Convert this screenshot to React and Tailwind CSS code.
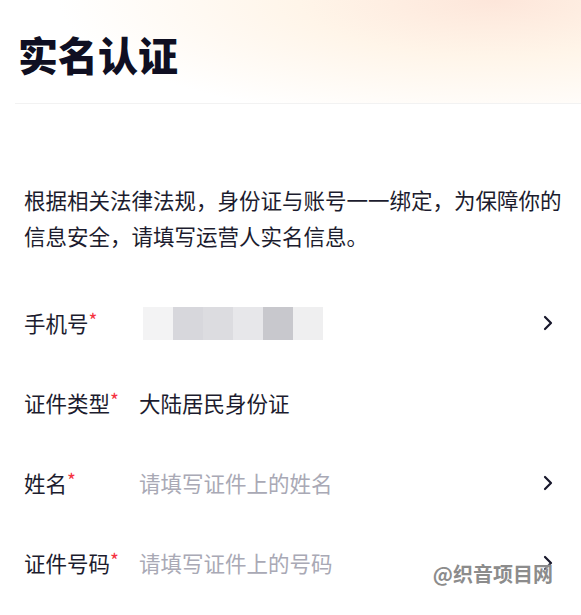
import React from "react";

const mosaic = ["#f3f3f4", "#d7d7dc", "#dcdce0", "#e7e7ea", "#c8c8cd", "#efeff0"];

function Chevron() {
  return (
    <svg width="12" height="16" viewBox="0 0 12 16" fill="none" className="shrink-0">
      <polyline
        points="3,2 9,8 3,14"
        stroke="#17172b"
        strokeWidth="2.2"
        strokeLinecap="round"
        strokeLinejoin="round"
      />
    </svg>
  );
}

function Row({ label, children, arrow = true }) {
  return (
    <div className="flex h-[80px] items-center pl-6 pr-[27px]">
      <div className="w-[115px] shrink-0 text-[#1c1c2e]">
        {label}
        <span className="relative top-[5px] inline-block align-top text-[19px] leading-none text-[#f5333f]">*</span>
      </div>
      <div className="flex flex-1 items-center">{children}</div>
      {arrow && <Chevron />}
    </div>
  );
}

export default function App() {
  return (
    <div className="relative min-h-[615px] w-full overflow-hidden bg-white font-['Noto_Sans_CJK_SC','Noto_Sans',sans-serif] text-[21.5px] leading-[36px]">
      <div className="bg-[radial-gradient(ellipse_75%_120%_at_85%_0%,#fde6da_0%,#fff5e9_45%,#ffffff_100%)]">
        <div className="h-[103px] pl-[18px] pt-[32px]">
          <h1 className="text-[40px] font-black leading-[44px] text-[#0f0f22]">实名认证</h1>
        </div>
        <div className="ml-[15px] border-b border-[#f2f2f2]" />
      </div>

      <p className="mt-[78px] pl-6 pr-[12px] text-[#1c1c2e]">
        根据相关法律法规，身份证与账号一一绑定，为保障你的信息安全，请填写运营人实名信息。
      </p>

      <div className="mt-[29px]">
        <Row label="手机号">
          <div className="ml-[4px] flex h-[33px]">
            {mosaic.map((c, i) => (
              <div key={i} className="h-full w-[30px]" style={{ backgroundColor: c }} />
            ))}
          </div>
        </Row>
        <Row label="证件类型" arrow={false}>
          <span className="text-[#1c1c2e]">大陆居民身份证</span>
        </Row>
        <Row label="姓名">
          <span className="text-[#a9a9b5]">请填写证件上的姓名</span>
        </Row>
        <Row label="证件号码">
          <span className="text-[#a9a9b5]">请填写证件上的号码</span>
        </Row>
      </div>

      <div className="absolute right-[28px] top-[562px] text-[20px] font-bold leading-[24px] text-[#8c8c8c] [text-shadow:0_0_2px_#ffffff]">
        @织音项目网
      </div>
    </div>
  );
}
